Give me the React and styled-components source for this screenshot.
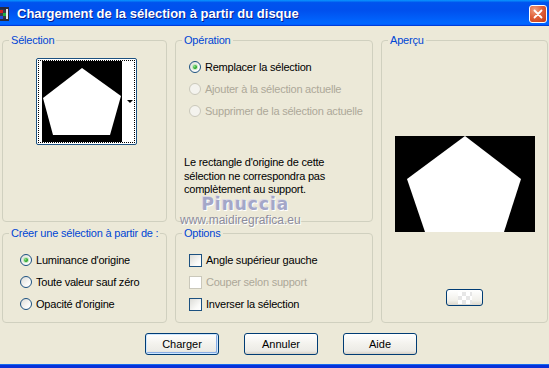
import React from 'react';
import styled, { createGlobalStyle } from 'styled-components';

const GlobalStyle = createGlobalStyle`
  html, body {
    margin: 0;
    padding: 0;
    background: #ece9d8;
  }
  * {
    box-sizing: border-box;
  }
`;

const Window = styled.div`
  width: 549px;
  height: 368px;
  display: flex;
  flex-direction: column;
  overflow: hidden;
  font-family: 'Liberation Sans', Arial, sans-serif;
  font-size: 11px;
  color: #000;
`;

const TitleBar = styled.div`
  height: 26px;
  flex: none;
  display: flex;
  align-items: center;
  background: linear-gradient(
    180deg,
    #0997ff 0%,
    #0053ee 10%,
    #0050ee 40%,
    #0066ff 86%,
    #0066ff 92%,
    #005bff 95%,
    #003dd7 97%,
    #003dd7 100%
  );
`;

const TitleIcon = styled.svg`
  flex: none;
  width: 9px;
  height: 14px;
  margin-top: 1px;
`;

const TitleText = styled.div`
  flex: 1;
  margin-left: 8px;
  color: #fff;
  font-weight: bold;
  font-size: 13px;
  text-shadow: 1px 1px 0 #0a1c8c;
  white-space: nowrap;
`;

const CloseBtn = styled.div`
  width: 18px;
  height: 18px;
  margin-right: 2px;
  margin-top: 1px;
  border: 1px solid #fff;
  border-radius: 3px;
  background: radial-gradient(circle at 30% 25%, #f0a080 0%, #e0603a 45%, #c33a14 100%);
  display: flex;
  align-items: center;
  justify-content: center;
`;

const Body = styled.div`
  position: relative;
  flex: 1;
  background: #ece9d8;
  border-bottom: 3px solid #0831d9;
  box-shadow: inset 0 -1px 0 #166aee;
`;

const Grid = styled.div`
  display: grid;
  grid-template-columns: 165px 198px 167px;
  grid-template-rows: 188px 96px;
  column-gap: 8px;
  row-gap: 5px;
  padding: 8px 0 0 2px;
`;

const Group = styled.fieldset`
  margin: 0;
  min-width: 0;
  padding: 0;
  border: 1px solid #d0d0bf;
  border-radius: 4px;
  grid-column: ${(p) => p.$col};
  grid-row: ${(p) => p.$row};
`;

const Legend = styled.legend`
  margin-left: 6px;
  padding: 0 2px;
  line-height: 13px;
  white-space: nowrap;
  letter-spacing: -0.2px;
  color: #0046d5;
`;

const Content = styled.div`
  display: flex;
  flex-direction: column;
  align-items: ${(p) => (p.$center ? 'center' : 'flex-start')};
  padding: ${(p) => p.$pad || '9px 0 0 13px'};
  letter-spacing: -0.22px;
`;

const Option = styled.div`
  height: 22px;
  display: flex;
  align-items: center;
  gap: 4px;
  white-space: nowrap;
  color: ${(p) => (p.$disabled ? '#aca899' : '#000')};
`;

const Radio = styled.span`
  width: 12px;
  height: 12px;
  flex: none;
  border-radius: 50%;
  border: 1px solid ${(p) => (p.$disabled ? '#cac8bb' : '#1c5180')};
  background: ${(p) =>
    p.$disabled ? '#f4f3ee' : 'linear-gradient(135deg, #dcdcd7 0%, #fbfbf9 70%, #fff 100%)'};
  display: flex;
  align-items: center;
  justify-content: center;
  &::after {
    content: '';
    display: ${(p) => (p.$checked ? 'block' : 'none')};
    width: 4px;
    height: 4px;
    border-radius: 50%;
    background: radial-gradient(circle at 35% 35%, #8be28a 0%, #21a121 60%, #128412 100%);
    box-shadow: 0 0 0 1px #c4e8c0;
  }
`;

const Check = styled.span`
  width: 13px;
  height: 13px;
  flex: none;
  border: 1px solid ${(p) => (p.$disabled ? '#cac8bb' : '#1c5180')};
  background: ${(p) =>
    p.$disabled ? '#fff' : 'linear-gradient(135deg, #dcdcd7 0%, #fbfbf9 70%, #fff 100%)'};
`;

const Note = styled.p`
  margin: 34px 0 0 -5px;
  line-height: 13.5px;
`;

const Combo = styled.div`
  width: 101px;
  height: 87px;
  border: 1px solid #1c5180;
  border-radius: 2px;
  background: #fff;
  padding: 1px;
`;

const Focus = styled.div`
  height: 100%;
  border: 1px dotted #000;
  display: flex;
  padding-left: 3px;
`;

const ArrowZone = styled.div`
  flex: 1;
  display: flex;
  align-items: center;
  justify-content: flex-end;
  padding-right: 1px;
  &::after {
    content: '';
    border-left: 3px solid transparent;
    border-right: 3px solid transparent;
    border-top: 3px solid #000;
  }
`;

const Preview = styled.svg`
  display: block;
  margin-top: 89px;
  flex: none;
`;

const SmallBtn = styled.div`
  width: 37px;
  height: 17px;
  margin-top: 57px;
  border: 1px solid #003c74;
  border-radius: 3px;
  background: linear-gradient(180deg, #fff 0%, #f1f0ea 70%, #dcd8cd 100%);
  display: flex;
  justify-content: center;
  align-items: center;
  &::after {
    content: '';
    width: 14px;
    height: 12px;
    background: repeating-conic-gradient(#e6e6e6 0% 25%, #fff 0% 50%) 0 0 / 8px 8px;
  }
`;

const ButtonRow = styled.div`
  display: flex;
  gap: 25px;
  padding-left: 145px;
  margin-top: 10px;
`;

const Button = styled.div`
  width: 74px;
  height: 22px;
  border: 1px solid #003c74;
  border-radius: 3px;
  background: linear-gradient(180deg, #fff 0%, #f3f2ed 50%, #ecebe6 85%, #d6d0c5 100%);
  display: flex;
  align-items: center;
  justify-content: center;
  box-shadow: ${(p) =>
    p.$default ? 'inset 0 0 0 1px #cee7ff, inset -1px -1px 0 1px #89ade4' : 'none'};
`;

const Watermark = styled.div`
  position: absolute;
  left: 180px;
  top: 169px;
  display: flex;
  flex-direction: column;
  align-items: center;
  pointer-events: none;
`;

const WmName = styled.div`
  font-family: 'DejaVu Sans', Verdana, sans-serif;
  font-weight: bold;
  font-size: 17px;
  line-height: 18px;
  letter-spacing: 1px;
  color: #a4a7c8;
  text-shadow: 1px 1px 0 #fff, -1px -1px 0 #d8d8e6;
  margin-left: 10px;
`;

const WmUrl = styled.div`
  font-family: 'Liberation Sans', Arial, sans-serif;
  font-size: 12px;
  line-height: 14px;
  color: #8c8c9c;
  text-shadow: 1px 1px 0 #fff;
`;

const Pentagon = ({ w, h, points }) => (
  <svg width={w} height={h} viewBox={`0 0 ${w} ${h}`} style={{ display: 'block', flex: 'none' }}>
    <rect width={w} height={h} fill="#000" />
    <polygon points={points} fill="#fff" />
  </svg>
);

export default function App() {
  return (
    <>
      <GlobalStyle />
      <Window>
        <TitleBar>
          <TitleIcon viewBox="0 0 9 14">
            <rect x="0" y="0" width="9" height="14" fill="#2a2a3a" />
            <circle cx="2" cy="7" r="5" fill="#3a3a4a" />
            <rect x="0" y="3" width="3" height="3" fill="#d02020" />
            <rect x="3" y="6" width="3" height="3" fill="#20b040" />
            <rect x="0" y="9" width="3" height="3" fill="#2050e0" />
            <rect x="6" y="2" width="2" height="10" fill="#e8e8e8" />
          </TitleIcon>
          <TitleText>Chargement de la sélection à partir du disque</TitleText>
          <CloseBtn>
            <svg width="10" height="10" viewBox="0 0 10 10">
              <path d="M1.5 1.5 L8.5 8.5 M8.5 1.5 L1.5 8.5" stroke="#fff" strokeWidth="1.8" strokeLinecap="round" />
            </svg>
          </CloseBtn>
        </TitleBar>
        <Body>
          <Grid>
            <Group $col="1" $row="1">
              <Legend>Sélection</Legend>
              <Content $pad="11px 0 0 33px">
                <Combo>
                  <Focus>
                    <Pentagon w={80} h={81} points="40,7 79,35 68,74 11,74 1,37" />
                    <ArrowZone />
                  </Focus>
                </Combo>
              </Content>
            </Group>

            <Group $col="2" $row="1">
              <Legend>Opération</Legend>
              <Content>
                <Option>
                  <Radio $checked />
                  Remplacer la sélection
                </Option>
                <Option $disabled>
                  <Radio $disabled />
                  Ajouter à la sélection actuelle
                </Option>
                <Option $disabled>
                  <Radio $disabled />
                  Supprimer de la sélection actuelle
                </Option>
                <Note>
                  Le rectangle d'origine de cette
                  <br />
                  sélection ne correspondra pas
                  <br />
                  complètement au support.
                </Note>
              </Content>
            </Group>

            <Group $col="3" $row="1 / span 2">
              <Legend>Aperçu</Legend>
              <Content $pad="0" $center>
                <Preview width="140" height="96" viewBox="0 0 140 96">
                  <rect width="140" height="96" fill="#000" />
                  <polygon points="70,0 126,43 109,96 30,96 12,43" fill="#fff" />
                </Preview>
                <SmallBtn />
              </Content>
            </Group>

            <Group $col="1" $row="2">
              <Legend>Créer une sélection à partir de :</Legend>
              <Content $pad="9px 0 0 17px">
                <Option>
                  <Radio $checked />
                  Luminance d'origine
                </Option>
                <Option>
                  <Radio />
                  Toute valeur sauf zéro
                </Option>
                <Option>
                  <Radio />
                  Opacité d'origine
                </Option>
              </Content>
            </Group>

            <Group $col="2" $row="2">
              <Legend>Options</Legend>
              <Content>
                <Option>
                  <Check />
                  Angle supérieur gauche
                </Option>
                <Option $disabled>
                  <Check $disabled />
                  Couper selon support
                </Option>
                <Option>
                  <Check />
                  Inverser la sélection
                </Option>
              </Content>
            </Group>
          </Grid>

          <ButtonRow>
            <Button $default>Charger</Button>
            <Button>Annuler</Button>
            <Button>Aide</Button>
          </ButtonRow>

          <Watermark>
            <WmName>Pinuccia</WmName>
            <WmUrl>www.maidiregrafica.eu</WmUrl>
          </Watermark>
        </Body>
      </Window>
    </>
  );
}
